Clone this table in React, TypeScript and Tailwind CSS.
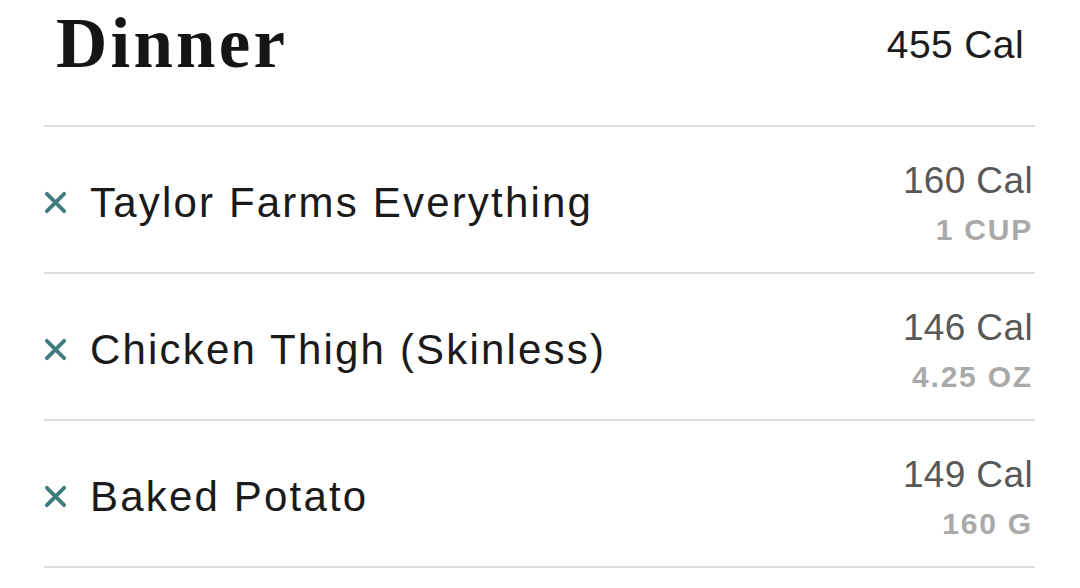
import React from "react";

const items = [
  { name: "Taylor Farms Everything", cal: "160 Cal", unit: "1 CUP" },
  { name: "Chicken Thigh (Skinless)", cal: "146 Cal", unit: "4.25 OZ" },
  { name: "Baked Potato", cal: "149 Cal", unit: "160 G" },
];

function XIcon() {
  return (
    <svg width="23" height="23" viewBox="0 0 24 24" className="shrink-0">
      <path d="M3 3 L21 21 M21 3 L3 21" stroke="#3e7b7d" strokeWidth="4" strokeLinecap="round" />
    </svg>
  );
}

export default function App() {
  const sans = { fontFamily: '"Liberation Sans", Arial, sans-serif' };
  return (
    <div className="w-[1080px] h-[588px] bg-white overflow-hidden pl-[44px] pr-[45px]" style={sans}>
      <div className="flex items-start justify-between h-[127px] border-b-2 border-[#dcdcdc]">
        <div
          className="text-[71px] leading-none font-bold text-[#151515] ml-[12px] mt-[8px] tracking-[0.045em]"
          style={{ fontFamily: '"Liberation Serif", "Times New Roman", serif' }}
        >
          Dinner
        </div>
        <div className="text-[39px] leading-none text-[#1c1c1c] mt-[25px] mr-[11px] tracking-[0.01em]">455 Cal</div>
      </div>
      {items.map((it) => (
        <div key={it.name} className="flex items-center justify-between h-[147px] border-b-2 border-[#dcdcdc]">
          <div className="flex items-center gap-[23px] mt-[6px]">
            <XIcon />
            <span className="text-[42px] leading-none text-[#1a1a1a] tracking-[0.052em]">{it.name}</span>
          </div>
          <div className="flex flex-col items-end mr-[2px] mt-[8px]">
            <span className="text-[37px] leading-none text-[#585858] tracking-[0.01em]">{it.cal}</span>
            <span className="text-[30px] leading-none font-bold text-[#a9a9a9] tracking-[0.06em] mt-[16px]">
              {it.unit}
            </span>
          </div>
        </div>
      ))}
    </div>
  );
}
